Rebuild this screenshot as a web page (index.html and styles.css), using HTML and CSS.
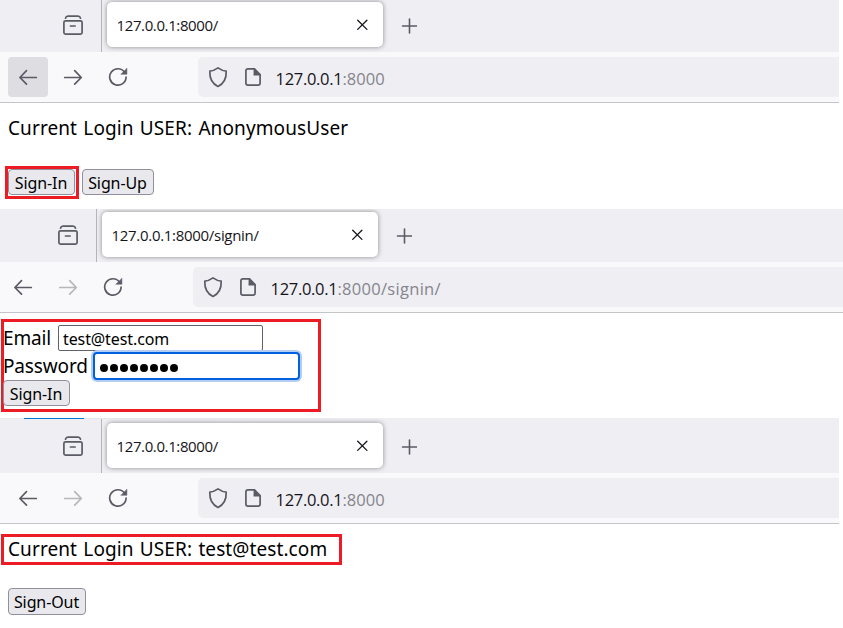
FILE: index.html
```html
<!DOCTYPE html>
<html lang="en">
<head>
<meta charset="utf-8">
<title>127.0.0.1:8000</title>
<link rel="stylesheet" href="styles.css">
</head>
<body>
<svg class="defs" aria-hidden="true">
  <symbol id="archive" viewBox="0 0 20 20"><path d="M2.5 3.2Q3 1.2 5 1.2h10q2 0 2.500 2M2.500 5.900h15q1.600 0 1.600 1.600v10q0 1.600-1.600 1.600h-15q-1.600 0-1.600-1.600v-10q0-1.600 1.600-1.600zM7.500 11h4.600"/></symbol>
  <symbol id="back" viewBox="0 0 20 20"><path d="M18.300 10.500H2M8.500 3.700L1.900 10.500l6.600 6.700"/></symbol>
  <symbol id="forward" viewBox="0 0 20 20"><path d="M1.700 10.500h16.300M11.700 3.700l6.600 6.800-6.600 6.700"/></symbol>
  <symbol id="reload" viewBox="0 0 20 20"><path d="M16.600 5.200A8.200 8.200 0 1 0 18.100 10"/><path class="solid" d="M18.900 1.500v5.800h-5.800z"/></symbol>
  <symbol id="shield" viewBox="0 0 20 22"><path d="M10 1.900Q14.500 5 18.200 5.200C18.500 12.500 16 17.500 10 20.400 4 17.500 1.500 12.500 1.800 5.200Q5.500 5 10 1.900z"/></symbol>
  <symbol id="page" viewBox="0 0 18 20"><path d="M10.500 1.900H4Q1.900 1.900 1.900 4v12Q1.900 18.100 4 18.100h10q2.100 0 2.100-2.100V7.500z"/><path class="solid" d="M10 1.500l6.700 6.700H10z"/></symbol>
  <symbol id="close" viewBox="0 0 12 12"><path d="M1.700 1.200l9.200 9.200M10.900 1.200l-9.200 9.200"/></symbol>
  <symbol id="plus" viewBox="0 0 16 16"><path d="M8.500 1v14M1.500 8h14"/></symbol>
</svg>

<section class="window home">
  <div class="tabs">
    <div class="tabs-start"><svg class="i-archive"><use href="#archive"/></svg></div>
    <div class="tab"><span class="tab-title">127.0.0.1:8000/</span><svg class="i-close"><use href="#close"/></svg></div>
    <svg class="i-plus"><use href="#plus"/></svg>
  </div>
  <div class="toolbar">
    <span class="nav pressed"><svg><use href="#back"/></svg></span>
    <span class="nav"><svg><use href="#forward"/></svg></span>
    <span class="nav"><svg><use href="#reload"/></svg></span>
    <div class="address"><svg class="i-shield"><use href="#shield"/></svg><svg class="i-page"><use href="#page"/></svg><span class="url">127.0.0.1<span class="dim">:8000</span></span></div>
  </div>
  <main class="page">
    <p class="user">Current Login USER: AnonymousUser</p>
    <div class="actions"><button class="marked w67">Sign-In</button><button class="w72">Sign-Up</button></div>
  </main>
</section>

<section class="window signin">
  <div class="tabs">
    <div class="tabs-start"><svg class="i-archive"><use href="#archive"/></svg></div>
    <div class="tab"><span class="tab-title">127.0.0.1:8000/signin/</span><svg class="i-close"><use href="#close"/></svg></div>
    <svg class="i-plus"><use href="#plus"/></svg>
  </div>
  <div class="toolbar">
    <span class="nav"><svg><use href="#back"/></svg></span>
    <span class="nav off"><svg><use href="#forward"/></svg></span>
    <span class="nav"><svg><use href="#reload"/></svg></span>
    <div class="address"><svg class="i-shield"><use href="#shield"/></svg><svg class="i-page"><use href="#page"/></svg><span class="url">127.0.0.1<span class="dim">:8000/signin/</span></span></div>
  </div>
  <main class="page">
    <form class="form">
      <div class="row email"><label for="email">Email</label><input id="email" type="text" value="test@test.com"></div>
      <div class="row password"><label>Password</label><div class="field"><i></i><i></i><i></i><i></i><i></i><i></i><i></i><i></i></div></div>
      <button type="button" class="w67">Sign-In</button>
    </form>
  </main>
</section>

<section class="window account">
  <div class="tabs">
    <div class="tabs-start"><svg class="i-archive"><use href="#archive"/></svg></div>
    <div class="tab"><span class="tab-title">127.0.0.1:8000/</span><svg class="i-close"><use href="#close"/></svg></div>
    <svg class="i-plus"><use href="#plus"/></svg>
  </div>
  <div class="toolbar">
    <span class="nav"><svg><use href="#back"/></svg></span>
    <span class="nav off"><svg><use href="#forward"/></svg></span>
    <span class="nav"><svg><use href="#reload"/></svg></span>
    <div class="address"><svg class="i-shield"><use href="#shield"/></svg><svg class="i-page"><use href="#page"/></svg><span class="url">127.0.0.1<span class="dim">:8000</span></span></div>
  </div>
  <main class="page">
    <p class="user boxed">Current Login USER: test@test.com</p>
    <div class="actions"><button class="w78">Sign-Out</button></div>
  </main>
</section>
</body>
</html>
```
FILE: styles.css
```css
* { box-sizing: border-box; }
body { margin: 0; width: 843px; height: 628px; overflow: hidden; background: #fff; color: #000; font-family: "Noto Sans", sans-serif; }
.defs { position: absolute; width: 0; height: 0; }
svg { display: block; flex: none; width: 20px; height: 20px; fill: none; stroke: #5b5b66; stroke-width: 1.7; stroke-linecap: round; stroke-linejoin: round; }
.solid { fill: #5b5b66; stroke-width: .5; }

.window { width: 839px; overflow: hidden; }
.home { height: 209px; }
.signin { width: 843px; height: 209px; }
.account { height: 210px; }

.tabs { display: flex; align-items: flex-end; height: 52px; background: #efeef3; }
.signin .tabs { height: 53px; }
.account .tabs { height: 55px; background: linear-gradient(90deg, #e8e8ea 24px, #0078d4 24px, #0078d4 84px, #e6e6e9 84px, #efeef3 340px) 0 0 / 100% 1px no-repeat, #efeef3; }
.tabs-start { display: flex; align-items: flex-end; justify-content: flex-end; width: 102px; height: 100%; padding: 0 18px 17px 0; border-right: 1px solid #b4b4ba; }
.account .tabs-start { height: 54px; }
.signin .tabs-start { width: 97px; }
.tab { display: flex; align-items: center; justify-content: space-between; width: 276px; height: 45px; margin: 0 0 5px 5px; padding: 0 15px 0 9.5px; background: #fff; border-radius: 5px; box-shadow: 0 0 5px rgba(0,0,0,.42); }
.tab-title { font-family: "Open Sans", sans-serif; font-size: 15px; letter-spacing: -.38px; color: #15141a; line-height: 20px; }
.signin .tab-title { letter-spacing: -.3px; }
.i-close { width: 12px; height: 12px; stroke: #15141a; stroke-width: 1.3; }
.i-plus { width: 16px; height: 16px; margin: 0 0 18px 18px; stroke-width: 1.6; }

.toolbar { display: flex; align-items: center; height: 51px; padding-left: 8px; background: #f9f9fb; border-bottom: 1px solid #c5c5c9; }
.signin .toolbar { padding-left: 3px; }
.nav { display: flex; align-items: center; justify-content: center; width: 40px; height: 40px; margin-right: 5px; border-radius: 4px; }
.pressed { background: #dddde2; }
.off { opacity: .42; }
.address { display: flex; align-items: center; flex: 1; height: 40px; margin-left: 55px; padding-left: 10px; background: #efeef3; border-radius: 5px 0 0 5px; }
.i-shield { height: 22px; }
.i-page { width: 18px; margin-left: 16px; }
.url { margin-left: 13.5px; padding-top: 4px; font-family: "Open Sans", sans-serif; font-size: 16.5px; letter-spacing: -.3px; color: #15141a; line-height: 24px; white-space: nowrap; }
.dim { color: #85858c; letter-spacing: .05px; }
.signin .dim { letter-spacing: .3px; }

.page { padding-left: 8px; }
.user { margin: 0; padding-top: 12px; height: 66px; font-size: 19px; line-height: 27px; letter-spacing: .1px; word-spacing: 1.2px; white-space: nowrap; }
.boxed { width: 341px; height: 31px; margin: 10px 0 23px -7px; padding: 0 0 0 4px; border: 3px solid #ed1c24; line-height: 25px; }
.actions { display: flex; gap: 7px; }
button { display: flex; align-items: center; justify-content: center; height: 26px; padding: 1px 1px 0 0; border: 1px solid #8f8f9d; border-radius: 4px; background: #e9e9ed; color: #000; font: 16px/20px "Noto Sans", sans-serif; letter-spacing: -.1px; white-space: nowrap; }
.marked { position: relative; }
.marked::after { content: ""; position: absolute; inset: -4px -5px -5px -4px; border: 3px solid #ed1c24; }
.w67 { width: 67px; }
.w72 { width: 72px; }
.w78 { width: 78px; height: 27px; }

.signin .page { padding: 6px 0 0 1px; }
.form { width: 320px; height: 93px; padding-top: 1px; border: 3px solid #ed1c24; }
.row { display: flex; align-items: center; font-size: 19px; line-height: 28px; }
.row label { flex: none; margin-left: -1px; letter-spacing: -.15px; }
.email { height: 29px; }
.email label { width: 55px; }
.email input { width: 205px; height: 26px; margin: 1px 0 0; padding: 2px 4px 0; border: 1px solid #62626c; border-radius: 2px; font: 16px/20px "Noto Sans", sans-serif; letter-spacing: -.1px; color: #000; }
.password { height: 28px; }
.password label { width: 90px; }
.field { display: flex; align-items: center; gap: 2px; width: 207px; height: 28px; padding: 4px 0 0 5px; border: 2px solid #0060df; border-radius: 4px; box-shadow: 0 0 0 2px #b4cdf2; background: #fff; }
.field i { width: 8px; height: 8px; border-radius: 50%; background: #000; }
.form button { margin-left: -1px; }
```
